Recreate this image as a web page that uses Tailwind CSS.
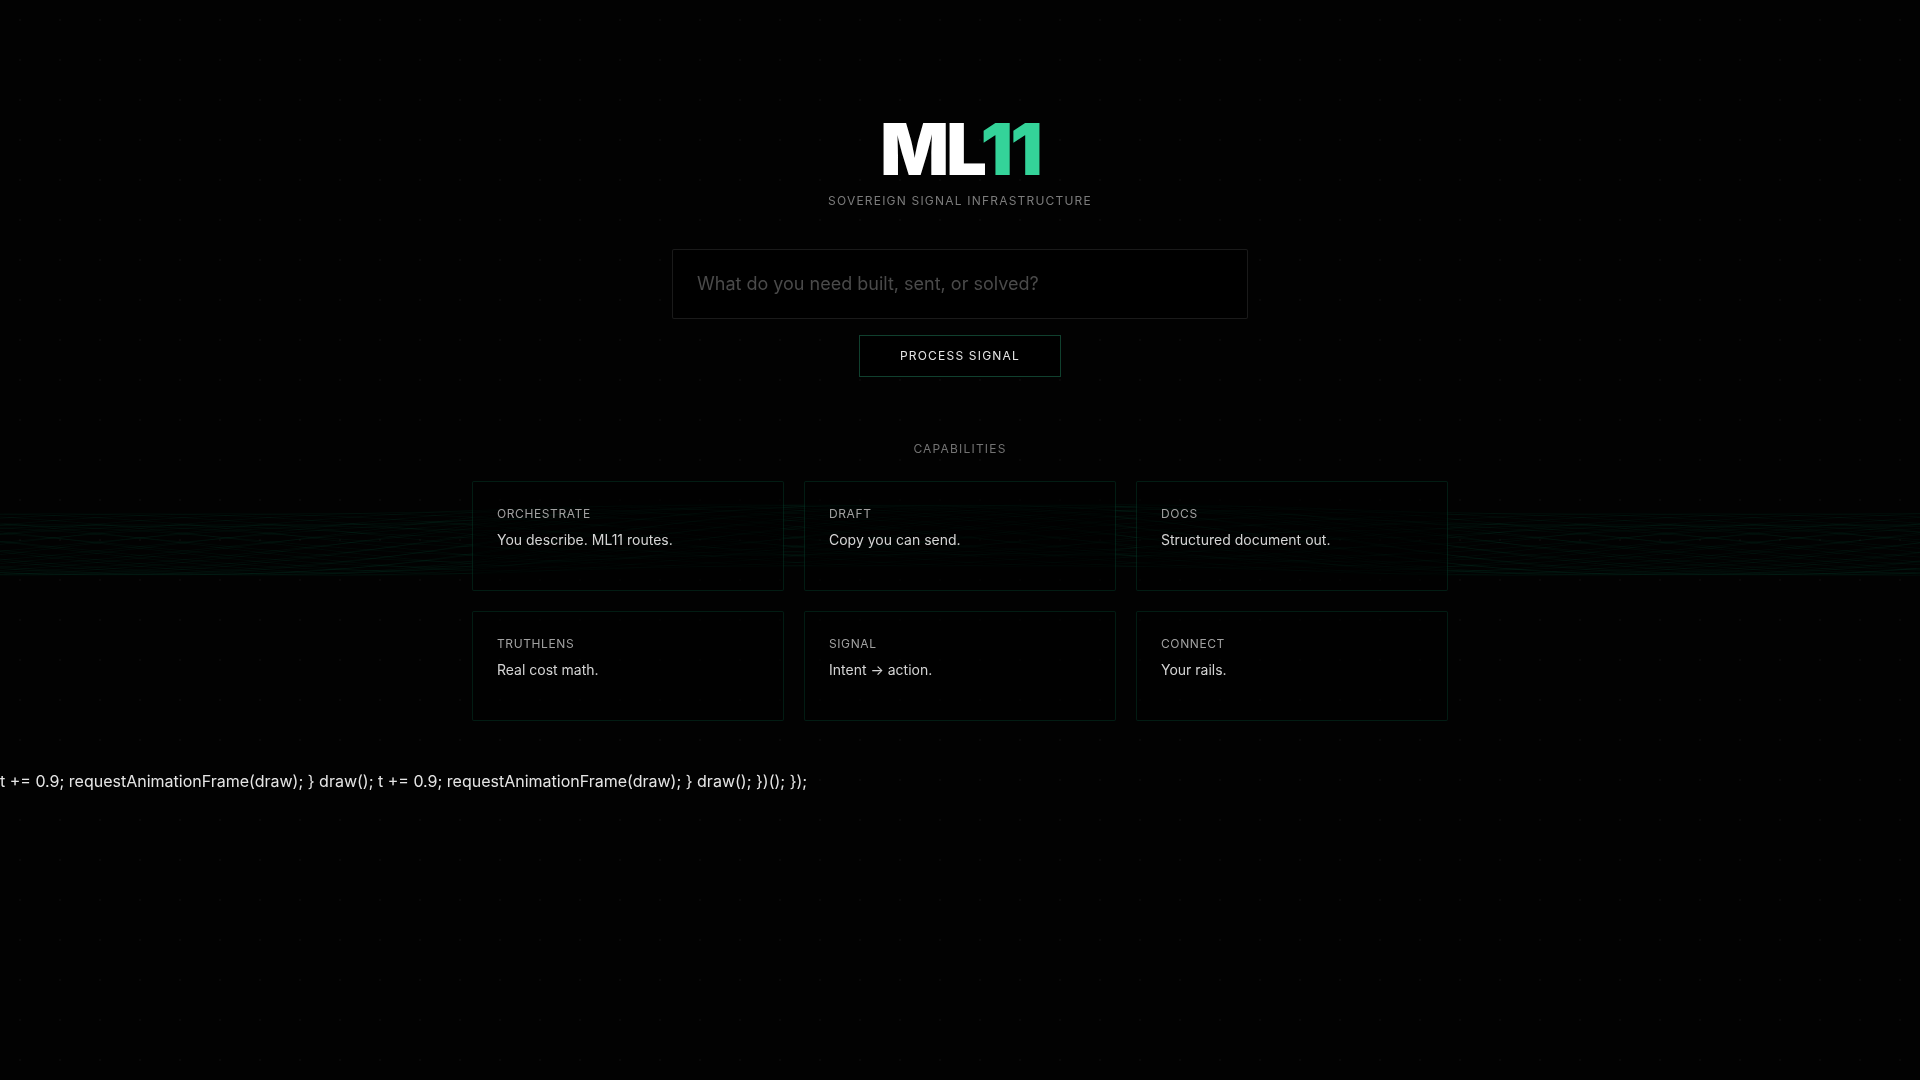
<!DOCTYPE html>
<html lang="en">
<head>
    <meta charset="UTF-8">
    <meta name="viewport" content="width=device-width, initial-scale=1.0">
    <title>ML11</title>
    <script src="https://cdn.jsdelivr.net/npm/@tailwindcss/browser@4"></script>
</head>
<body class="min-h-screen bg-[#020202] text-neutral-200 font-[Inter,sans-serif] overflow-x-hidden">
    <!-- background: dot grid + signal waves -->
    <div class="fixed inset-0 -z-10 bg-[radial-gradient(circle_at_center,rgba(255,255,255,0.03)_1px,transparent_1px)] bg-[size:40px_40px]"></div>
    <canvas id="waves" class="fixed inset-0 -z-10 w-full h-full"></canvas>

    <main class="flex flex-col items-center px-6 pt-[113px]">
        <h1 class="text-7xl leading-none font-black tracking-[-3px] text-white">ML<span class="text-[#34d399]">11</span></h1>
        <p class="mt-2 text-xs tracking-widest text-[#7c7c7c]">SOVEREIGN SIGNAL INFRASTRUCTURE</p>

        <form class="mt-10 w-full max-w-xl flex flex-col items-center" onsubmit="return false">
            <input type="text" aria-label="What do you need built, sent, or solved?" placeholder="What do you need built, sent, or solved?" class="w-full rounded-xs border border-white/10 bg-black px-6 py-5 text-lg text-white outline-none placeholder:text-[#4a4a4a]">
            <button type="submit" class="mt-4 border border-[#34d399]/30 bg-black px-10 py-3 text-xs tracking-widest text-neutral-200">PROCESS SIGNAL</button>
        </form>

        <section class="mt-16 w-full max-w-[976px]">
            <h2 class="text-center text-xs tracking-widest text-neutral-500">CAPABILITIES</h2>
            <div class="mt-6 grid grid-cols-3 gap-5">
                <div class="min-h-[110px] rounded-xs border border-[#10b981]/15 bg-black/50 p-6">
                    <h3 class="text-xs tracking-wider text-neutral-400">ORCHESTRATE</h3>
                    <p class="mt-2 text-sm text-neutral-300">You describe. ML11 routes.</p>
                </div>
                <div class="min-h-[110px] rounded-xs border border-[#10b981]/15 bg-black/50 p-6">
                    <h3 class="text-xs tracking-wider text-neutral-400">DRAFT</h3>
                    <p class="mt-2 text-sm text-neutral-300">Copy you can send.</p>
                </div>
                <div class="min-h-[110px] rounded-xs border border-[#10b981]/15 bg-black/50 p-6">
                    <h3 class="text-xs tracking-wider text-neutral-400">DOCS</h3>
                    <p class="mt-2 text-sm text-neutral-300">Structured document out.</p>
                </div>
                <div class="min-h-[110px] rounded-xs border border-[#10b981]/15 bg-black/50 p-6">
                    <h3 class="text-xs tracking-wider text-neutral-400">TRUTHLENS</h3>
                    <p class="mt-2 text-sm text-neutral-300">Real cost math.</p>
                </div>
                <div class="min-h-[110px] rounded-xs border border-[#10b981]/15 bg-black/50 p-6">
                    <h3 class="text-xs tracking-wider text-neutral-400">SIGNAL</h3>
                    <p class="mt-2 text-sm text-neutral-300">Intent → action.</p>
                </div>
                <div class="min-h-[110px] rounded-xs border border-[#10b981]/15 bg-black/50 p-6">
                    <h3 class="text-xs tracking-wider text-neutral-400">CONNECT</h3>
                    <p class="mt-2 text-sm text-neutral-300">Your rails.</p>
                </div>
            </div>
        </section>
    </main>

    <p class="mt-12 text-base">t += 0.9; requestAnimationFrame(draw); } draw(); t += 0.9; requestAnimationFrame(draw); } draw(); })(); });</p>

    <script>
        const canvas = document.getElementById('waves');
        const ctx = canvas.getContext('2d');
        const LINES = 36;

        function draw() {
            canvas.width = window.innerWidth;
            canvas.height = window.innerHeight;
            const mid = canvas.height / 2;
            ctx.strokeStyle = 'rgba(16, 185, 129, 0.055)';
            ctx.lineWidth = 1;

            for (let i = 0; i < LINES; i++) {
                const phase = (i / LINES) * Math.PI * 4;
                ctx.beginPath();
                for (let x = 0; x <= canvas.width; x += 4) {
                    const d = (x - 140) * 0.004;
                    // drift stays flat near the crests and moves quickly between them
                    const drift = d - 0.4 * Math.sin(2 * d);
                    const a = d + phase;
                    const y = mid + 7 * Math.cos(drift) + 27.7 * Math.cos(a) + 5.5 * Math.sin((a + drift) / 2);
                    ctx.lineTo(x, y);
                }
                ctx.stroke();
            }
        }

        window.addEventListener('resize', draw);
        draw();
    </script>
</body>
</html>
